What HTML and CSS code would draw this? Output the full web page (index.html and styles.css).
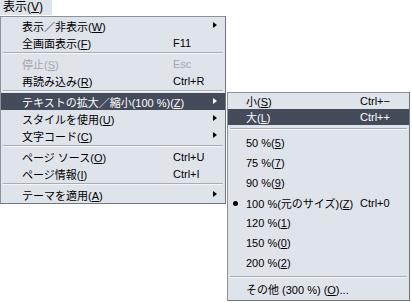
FILE: index.html
```html
<!DOCTYPE html>
<html lang="ja">
<head>
  <meta charset="UTF-8">
  <title>表示メニュー</title>
  <link rel="stylesheet" href="styles.css">
</head>
<body>
  <div class="menubar">
    <span class="menubar-item">表示(<u>V</u>)</span>
  </div>

  <div class="menus">
    <ul class="menu menu-main">
      <li class="item"><span class="label">表示／非表示(<u>W</u>)</span><span class="key"></span><span class="arrow"></span></li>
      <li class="item"><span class="label">全画面表示(<u>F</u>)</span><span class="key">F11</span><span class="noarrow"></span></li>
      <li class="sep"></li>
      <li class="item disabled"><span class="label">停止(<u>S</u>)</span><span class="key">Esc</span><span class="noarrow"></span></li>
      <li class="item"><span class="label">再読み込み(<u>R</u>)</span><span class="key">Ctrl+R</span><span class="noarrow"></span></li>
      <li class="sep"></li>
      <li class="item active"><span class="label">テキストの拡大／縮小(100 %)(<u>Z</u>)</span><span class="key"></span><span class="arrow"></span></li>
      <li class="item"><span class="label">スタイルを使用(<u>U</u>)</span><span class="key"></span><span class="arrow"></span></li>
      <li class="item"><span class="label">文字コード(<u>C</u>)</span><span class="key"></span><span class="arrow"></span></li>
      <li class="sep"></li>
      <li class="item"><span class="label">ページ ソース(<u>O</u>)</span><span class="key">Ctrl+U</span><span class="noarrow"></span></li>
      <li class="item"><span class="label">ページ情報(<u>I</u>)</span><span class="key">Ctrl+I</span><span class="noarrow"></span></li>
      <li class="sep"></li>
      <li class="item"><span class="label">テーマを適用(<u>A</u>)</span><span class="key"></span><span class="arrow"></span></li>
    </ul>

    <ul class="menu menu-sub">
      <li class="item short"><span class="mark"></span><span class="label">小(<u>S</u>)</span><span class="key">Ctrl+−</span></li>
      <li class="item short active"><span class="mark"></span><span class="label">大(<u>L</u>)</span><span class="key">Ctrl++</span></li>
      <li class="sep tall"></li>
      <li class="item"><span class="mark"></span><span class="label">50 %(<u>5</u>)</span><span class="key"></span></li>
      <li class="item"><span class="mark"></span><span class="label">75 %(<u>7</u>)</span><span class="key"></span></li>
      <li class="item"><span class="mark"></span><span class="label">90 %(<u>9</u>)</span><span class="key"></span></li>
      <li class="item"><span class="mark"><span class="dot"></span></span><span class="label">100 %(元のサイズ)(<u>Z</u>)</span><span class="key">Ctrl+0</span></li>
      <li class="item"><span class="mark"></span><span class="label">120 %(<u>1</u>)</span><span class="key"></span></li>
      <li class="item"><span class="mark"></span><span class="label">150 %(<u>0</u>)</span><span class="key"></span></li>
      <li class="item"><span class="mark"></span><span class="label">200 %(<u>2</u>)</span><span class="key"></span></li>
      <li class="sep tall"></li>
      <li class="item short"><span class="mark"></span><span class="label">その他 (300 %) (<u>O</u>)...</span><span class="key"></span></li>
    </ul>
  </div>
</body>
</html>
```

FILE: styles.css
```css
body {
  margin: 0;
  background: #ffffff;
  font-family: "Liberation Sans", "Noto Sans CJK JP", sans-serif;
  font-size: 11px;
  color: #000000;
}
u {
  text-decoration: underline;
  text-underline-offset: 1px;
}
.menubar {
  height: 16px;
  display: flex;
}
.menubar-item {
  width: 52px;
  height: 15px;
  line-height: 15px;
  padding-left: 3px;
  box-sizing: border-box;
  background: #dfe3ea;
  white-space: nowrap;
  font-size: 12px;
}
.menus {
  display: flex;
  align-items: flex-start;
  gap: 1px;
}
.menu {
  list-style: none;
  margin: 0;
  padding: 0;
  background: #dfe3ea;
  border: 1px solid #8c939c;
  border-right-color: #6f7680;
  border-bottom-color: #6f7680;
}
.menu-main {
  width: 224px;
}
.menu-sub {
  width: 181px;
  margin-top: 76px;
  padding-bottom: 3px;
}
.item {
  display: flex;
  align-items: center;
  height: 17px;
  white-space: nowrap;
}
.menu-main .item {
  padding-left: 21px;
}
.menu-main .label {
  width: 151px;
}
.menu-main .key {
  width: 38px;
}
.arrow,
.noarrow {
  width: 14px;
  height: 7px;
}
.arrow::before {
  content: "";
  display: block;
  margin-left: 2px;
  width: 0;
  height: 0;
  border-top: 3.5px solid transparent;
  border-bottom: 3.5px solid transparent;
  border-left: 4px solid #000000;
}
.active {
  background: #444c5c;
  color: #ffffff;
}
.active .arrow::before {
  border-left-color: #ffffff;
}
.disabled {
  color: #a3a8ae;
}
.sep {
  height: 4px;
  margin: 0 2px;
  display: flex;
  flex-direction: column;
  justify-content: center;
}
.sep::before {
  content: "";
  display: block;
  height: 1px;
  background: #a6adb6;
  border-bottom: 1px solid #f4f6f8;
}
.sep.tall {
  height: 8px;
}
.menu-sub .item {
  height: 20px;
}
.menu-sub .item.short {
  height: 16px;
}
.mark {
  width: 18px;
  flex: none;
  display: flex;
  justify-content: center;
}
.dot {
  width: 5px;
  height: 5px;
  border-radius: 50%;
  background: #000000;
  margin-left: -4px;
}
.menu-sub .label {
  flex: 1;
}
.menu-sub .key {
  width: 49px;
  flex: none;
}
```
